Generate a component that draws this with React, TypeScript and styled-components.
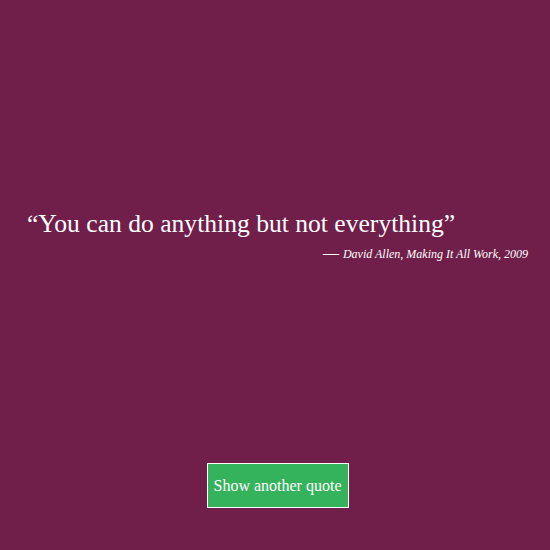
import styled, { createGlobalStyle } from 'styled-components';

const GlobalStyle = createGlobalStyle`
  html, body {
    margin: 0;
    padding: 0;
    background: #701e4a;
  }
`;

const Page = styled.div`
  width: 550px;
  height: 550px;
  box-sizing: border-box;
  display: flex;
  flex-direction: column;
  align-items: center;
  background: #701e4a;
  color: #ffffff;
  font-family: 'Liberation Serif', 'Times New Roman', serif;
  padding: 0 22px 42px 27px;
`;

const QuoteBox = styled.blockquote`
  flex: 1;
  align-self: stretch;
  margin: 0;
  display: flex;
  flex-direction: column;
  justify-content: center;
  padding-top: 9px;
`;

const QuoteText = styled.p`
  margin: 0;
  font-size: 25.6px;
  line-height: 30px;
`;

const Attribution = styled.footer`
  margin-top: 4px;
  text-align: right;
  font-size: 16px;
  line-height: 20px;
  &:before {
    content: '\\2014 \\00A0';
  }
`;

const Cite = styled.cite`
  font-style: italic;
  font-size: 12px;
`;

const Button = styled.button`
  width: 142px;
  height: 45px;
  background: #35b35c;
  border: 1px solid #ffffff;
  color: #ffffff;
  font-family: 'Liberation Serif', 'Times New Roman', serif;
  font-size: 16px;
  padding: 0;
  cursor: pointer;
`;

const App = () => {
  return (
    <>
      <GlobalStyle />
      <Page>
        <QuoteBox>
          <QuoteText>“You can do anything but not everything”</QuoteText>
          <Attribution>
            <Cite>David Allen, Making It All Work, 2009</Cite>
          </Attribution>
        </QuoteBox>
        <Button>Show another quote</Button>
      </Page>
    </>
  );
};

export default App;
